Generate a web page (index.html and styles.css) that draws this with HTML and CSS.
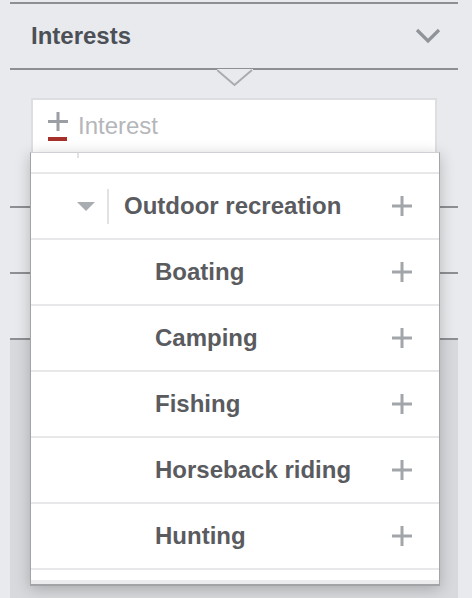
FILE: index.html
```html
<!DOCTYPE html>
<html>
<head>
<meta charset="utf-8">
<link rel="stylesheet" href="styles.css">
</head>
<body>
<div class="panel">
  <div class="hdr">
    <span class="title">Interests</span>
    <svg class="chev" width="26" height="16" viewBox="0 0 26 16"><polyline points="2,2 13,13 24,2" fill="none" stroke="#8f939a" stroke-width="3.2"/></svg>
    <svg class="notch" width="36" height="20" viewBox="0 0 36 20"><rect x="0" y="0" width="36" height="3" fill="#e9eaed"/><polyline points="0,1 17.5,16 35,1" fill="none" stroke="#a9abb0" stroke-width="2"/></svg>
  </div>
  <div class="body">
    <div class="input">
      <svg class="addicon" width="20" height="30" viewBox="0 0 20 30"><rect x="8.5" y="0" width="3" height="19" fill="#9b9ea3"/><rect x="0" y="8" width="20" height="3" fill="#9b9ea3"/><rect x="0" y="25" width="19" height="4" fill="#a5312a"/></svg>
      <span class="ph">Interest</span>
    </div>
  </div>
  <div class="sec"></div>
  <div class="sec"></div>
  <div class="rest"></div>

  <div class="menu">
    <div class="partial"><span class="stub"></span></div>
    <div class="row parent">
      <svg class="caret" width="18" height="9" viewBox="0 0 18 9"><polygon points="0,0 18,0 9,9" fill="#a9acb1"/></svg>
      <span class="vsep"></span>
      <span class="label">Outdoor recreation</span>
      <svg class="plus" width="20" height="20" viewBox="0 0 20 20"><rect x="8.5" y="0" width="3" height="20" fill="#a2a5aa"/><rect x="0" y="8.5" width="20" height="3" fill="#a2a5aa"/></svg>
    </div>
    <div class="row child">
      <span class="label">Boating</span>
      <svg class="plus" width="20" height="20" viewBox="0 0 20 20"><rect x="8.5" y="0" width="3" height="20" fill="#a2a5aa"/><rect x="0" y="8.5" width="20" height="3" fill="#a2a5aa"/></svg>
    </div>
    <div class="row child">
      <span class="label">Camping</span>
      <svg class="plus" width="20" height="20" viewBox="0 0 20 20"><rect x="8.5" y="0" width="3" height="20" fill="#a2a5aa"/><rect x="0" y="8.5" width="20" height="3" fill="#a2a5aa"/></svg>
    </div>
    <div class="row child">
      <span class="label">Fishing</span>
      <svg class="plus" width="20" height="20" viewBox="0 0 20 20"><rect x="8.5" y="0" width="3" height="20" fill="#a2a5aa"/><rect x="0" y="8.5" width="20" height="3" fill="#a2a5aa"/></svg>
    </div>
    <div class="row child">
      <span class="label">Horseback riding</span>
      <svg class="plus" width="20" height="20" viewBox="0 0 20 20"><rect x="8.5" y="0" width="3" height="20" fill="#a2a5aa"/><rect x="0" y="8.5" width="20" height="3" fill="#a2a5aa"/></svg>
    </div>
    <div class="row child">
      <span class="label">Hunting</span>
      <svg class="plus" width="20" height="20" viewBox="0 0 20 20"><rect x="8.5" y="0" width="3" height="20" fill="#a2a5aa"/><rect x="0" y="8.5" width="20" height="3" fill="#a2a5aa"/></svg>
    </div>
    <div class="tail"></div>
    <div class="band"></div>
  </div>
</div>
</body>
</html>
```
FILE: styles.css
```css
* { box-sizing: border-box; }
html, body { margin: 0; padding: 0; }
body {
  background: #e9eaed;
  font-family: "Liberation Sans", Arial, sans-serif;
  width: 472px;
  height: 598px;
  overflow: hidden;
}
.panel {
  position: relative;
  margin: 0 14px 0 10px;
  padding-top: 2px;
  height: 598px;
  display: flex;
  flex-direction: column;
}
.hdr {
  position: relative;
  height: 68px;
  border-top: 2px solid #8e8f93;
  border-bottom: 2px solid #8e8f93;
  display: flex;
  align-items: center;
  justify-content: space-between;
  padding: 0 17px 0 21px;
}
.title {
  font-size: 24px;
  font-weight: bold;
  color: #4b4f56;
}
.chev { display: block; }
.notch {
  position: absolute;
  left: 207px;
  top: 65px;
}
.body {
  padding: 28px 21px 54px;
}
.input {
  height: 54px;
  background: #fff;
  border: 2px solid #dddee1;
  border-bottom: none;
  display: flex;
  align-items: flex-start;
  padding: 12px 0 0 15px;
}
.addicon { display: block; margin-top: 0; }
.ph {
  margin-left: 10px;
  font-size: 24px;
  line-height: 28px;
  color: #b4b6ba;
}
.sec {
  height: 66px;
  border-top: 2px solid #8e8f93;
}
.rest {
  flex: 1;
  border-top: 2px solid #8e8f93;
  background: #d8d9dc;
}
.menu {
  position: absolute;
  left: 20px;
  top: 152px;
  width: 410px;
  height: 434px;
  background: #fff;
  border: 1px solid #a3a4a6;
  border-top-color: #cfd0d3;
  border-bottom: 2px solid #a3a4a6;
  box-shadow: 0 3px 14px rgba(0, 0, 0, 0.22);
}
.partial {
  position: relative;
  height: 21px;
  border-bottom: 2px solid #e8e8ea;
}
.stub {
  position: absolute;
  left: 46px;
  top: 0;
  width: 2px;
  height: 5px;
  background: #e2e2e4;
}
.row {
  height: 66px;
  border-bottom: 2px solid #e8e8ea;
  display: flex;
  align-items: center;
  padding-right: 27px;
}
.row.parent { padding-left: 46px; }
.row.child { padding-left: 124px; }
.caret { display: block; }
.vsep {
  width: 2px;
  height: 35px;
  background: #e2e2e4;
  margin: 0 15px 0 12px;
}
.label {
  flex: 1;
  font-size: 24px;
  font-weight: bold;
  color: #5a5b5f;
}
.plus { display: block; }
.tail { height: 10px; }
.band { height: 4px; background: #ececee; }
```
